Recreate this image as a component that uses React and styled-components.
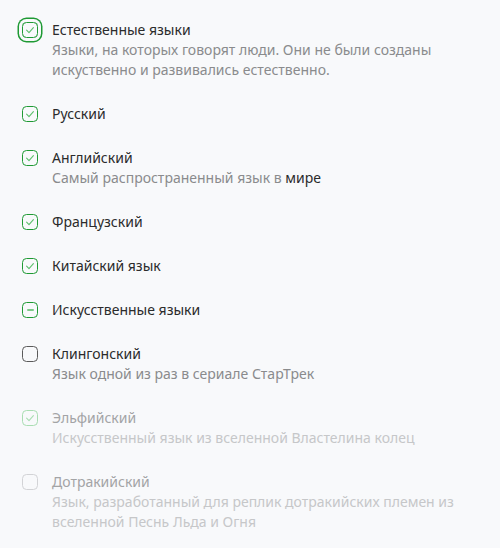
import React from 'react';
import styled, { createGlobalStyle, css } from 'styled-components';

const GlobalStyle = createGlobalStyle`
    html, body {
        margin: 0;
        background: #f8f9fb;
    }
    body {
        font-family: "Noto Sans", "Open Sans", sans-serif;
    }
`;

const List = styled.div`
    display: flex;
    flex-direction: column;
    gap: 24px;
    padding: 19.5px 8px 16px 22px;
`;

const Item = styled.div`
    display: flex;
    align-items: flex-start;
    gap: 14px;
`;

const Check = styled.span`
    flex: none;
    box-sizing: border-box;
    width: 16px;
    height: 16px;
    margin-top: 2px;
    border-radius: 4.5px;
    border: 1px solid #1f9a34;
    color: #5dbf6c;
    display: flex;
    align-items: center;
    justify-content: center;
    position: relative;
    svg {
        position: absolute;
        left: -1px;
        top: -1px;
    }
    ${({ $state }) => $state === 'off' && css`
        border-color: #5a5a5a;
    `}
    ${({ $disabled, $state }) => $disabled && css`
        border-color: ${$state === 'off' ? '#d2d3d6' : '#a9ddb2'};
        color: #a9ddb2;
    `}
    ${({ $focus }) => $focus && css`
        box-shadow: 0 0 0 3px #f8f9fb, 0 0 0 4.5px #1f9a34;
    `}
`;

const Dash = styled.span`
    width: 7px;
    height: 2px;
    border-radius: 1px;
    background: #7cca88;
`;

const Body = styled.div`
    display: flex;
    flex-direction: column;
`;

const Title = styled.div`
    font-size: 14px;
    line-height: 20px;
    color: ${({ $disabled }) => ($disabled ? '#a3a4a6' : '#2b2b2b')};
`;

const Desc = styled.div`
    font-size: 14px;
    line-height: 20px;
    color: ${({ $disabled }) => ($disabled ? '#c6c7c9' : '#8a8b8d')};
`;

const Link = styled.span`
    color: #2b2b2b;
`;

const items = [
    { title: 'Естественные языки', desc: 'Языки, на которых говорят люди. Они не были созданы искуственно и развивались естественно.', state: 'checked', focus: true },
    { title: 'Русский', state: 'checked' },
    { title: 'Английский', desc: <>Самый распространенный язык в <Link>мире</Link></>, state: 'checked' },
    { title: 'Французский', state: 'checked' },
    { title: 'Китайский язык', state: 'checked' },
    { title: 'Искусственные языки', state: 'mixed' },
    { title: 'Клингонский', desc: 'Язык одной из раз в сериале СтарТрек', state: 'off' },
    { title: 'Эльфийский', desc: 'Искусственный язык из вселенной Властелина колец', state: 'checked', disabled: true },
    { title: 'Дотракийский', desc: 'Язык, разработанный для реплик дотракийских племен из вселенной Песнь Льда и Огня', state: 'off', disabled: true },
];

function Box({ state, disabled, focus }) {
    return (
        <Check $state={state} $disabled={disabled} $focus={focus}>
            {state === 'checked' && (
                <svg width="16" height="16" viewBox="0 0 16 16">
                    <path d="M4.6 8.2 L7 10.6 L11.4 5.6" fill="none" stroke="currentColor" strokeWidth="1.1" strokeLinecap="round" strokeLinejoin="round" />
                </svg>
            )}
            {state === 'mixed' && <Dash />}
        </Check>
    );
}

export default function App() {
    return (
        <>
            <GlobalStyle />
            <List>
                {items.map((item) => (
                    <Item key={item.title}>
                        <Box state={item.state} disabled={item.disabled} focus={item.focus} />
                        <Body>
                            <Title $disabled={item.disabled}>{item.title}</Title>
                            {item.desc && <Desc $disabled={item.disabled}>{item.desc}</Desc>}
                        </Body>
                    </Item>
                ))}
            </List>
        </>
    );
}
